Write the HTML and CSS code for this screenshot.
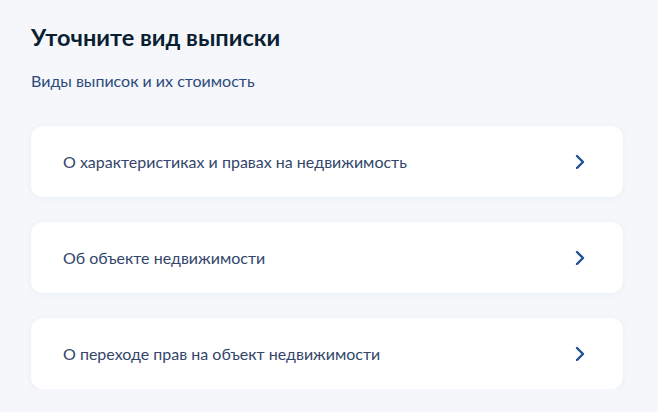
FILE: index.html
```html
<!DOCTYPE html>
<html lang="ru">
  <head>
    <meta charset="UTF-8" />
    <meta name="viewport" content="width=device-width, initial-scale=1.0" />
    <title>Уточните вид выписки</title>
    <link rel="stylesheet" href="styles.css">
  </head>
  <body>
    <div class="page">
      <h1>Уточните вид выписки</h1>
      <p class="subtitle">Виды выписок и их стоимость</p>

      <ul class="options">
        <li class="option">
          <span>О характеристиках и правах на недвижимость</span>
          <svg class="chevron" viewBox="0 0 10 16" width="10" height="16">
            <path d="M2 2 L8 8 L2 14" />
          </svg>
        </li>
        <li class="option">
          <span>Об объекте недвижимости</span>
          <svg class="chevron" viewBox="0 0 10 16" width="10" height="16">
            <path d="M2 2 L8 8 L2 14" />
          </svg>
        </li>
        <li class="option">
          <span>О переходе прав на объект недвижимости</span>
          <svg class="chevron" viewBox="0 0 10 16" width="10" height="16">
            <path d="M2 2 L8 8 L2 14" />
          </svg>
        </li>
      </ul>
    </div>
  </body>
</html>
```

FILE: styles.css
```css
body {
  margin: 0;
  font-family: Lato, "Noto Sans", sans-serif;
  background-color: #f5f7fb;
}
.page {
  width: 592px;
  padding: 20px 31px 0;
}
h1 {
  margin: 0;
  font-size: 23.5px;
  line-height: 34px;
  font-weight: 700;
  color: #0b1f33;
}
.subtitle {
  margin: 17px 0 0;
  font-size: 16px;
  line-height: 20px;
  color: #2c4a7c;
}
.options {
  list-style-type: none;
  margin: 35px 0 0;
  padding: 0;
  display: flex;
  flex-direction: column;
  gap: 25px;
}
.option {
  display: flex;
  align-items: center;
  justify-content: space-between;
  height: 71px;
  padding: 0 38px 0 32px;
  background-color: #ffffff;
  border-radius: 12px;
  box-shadow: 0 1px 6px rgba(40, 60, 110, 0.06);
  font-size: 16px;
  color: #33466b;
  cursor: pointer;
}
.chevron {
  fill: none;
  stroke: #1d4f94;
  stroke-width: 2.4;
  stroke-linecap: round;
  stroke-linejoin: round;
}
```
